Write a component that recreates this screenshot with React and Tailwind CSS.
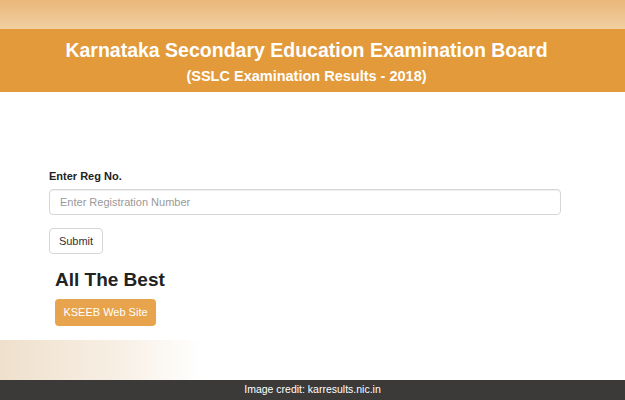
import React from 'react';

const App = () => {
  return (
    <div
      className="w-[625px] h-[400px] flex flex-col bg-white overflow-hidden"
      style={{ fontFamily: '"Liberation Sans", Arial, sans-serif' }}
    >
      {/* top band */}
      <div className="h-[29px] bg-gradient-to-b from-[#e9b77a] to-[#f1cfa2]" />

      {/* header */}
      <header className="h-[63px] bg-[#e39a3b] text-white flex flex-col items-center pt-[9px] pr-[12px]">
        <h1 className="text-[19.5px] font-bold leading-[24px]">
          Karnataka Secondary Education Examination Board
        </h1>
        <h2 className="text-[14.5px] font-bold leading-[18px] mt-[5px]">
          (SSLC Examination Results - 2018)
        </h2>
      </header>

      {/* form */}
      <main className="flex-1 flex flex-col pl-[49px] pt-[77px]">
        <label className="text-[11px] font-bold text-[#222] leading-[14px]">Enter Reg No.</label>
        <input
          placeholder="Enter Registration Number"
          className="mt-[6px] w-[512px] h-[26px] border border-[#d6d6d6] rounded-[4px] px-[10px] text-[11px] text-[#555] placeholder:text-[#999] shadow-[inset_0_1px_1px_rgba(0,0,0,0.06)] outline-none"
        />
        <button className="mt-[13px] w-[54px] h-[26px] border border-[#d6d6d6] rounded-[4px] bg-white text-[11px] text-[#333]">
          Submit
        </button>
        <div className="pl-[6px] mt-[15px]">
          <h3 className="text-[19px] font-bold text-[#222] leading-[22px]">All The Best</h3>
          <button className="mt-[8px] w-[101px] h-[27px] rounded-[4px] bg-[#e8a44c] text-white text-[11px]">
            KSEEB Web Site
          </button>
        </div>
      </main>

      {/* bottom fade */}
      <div className="h-[40px] bg-gradient-to-r from-[#efe0cc] via-[#f8f0e6] via-20% to-white to-[32%]" />

      {/* credit bar */}
      <footer className="h-[20px] bg-[#3b3a39] flex items-center justify-center text-white text-[10.5px]">
        Image credit: karresults.nic.in
      </footer>
    </div>
  );
};

export default App;
